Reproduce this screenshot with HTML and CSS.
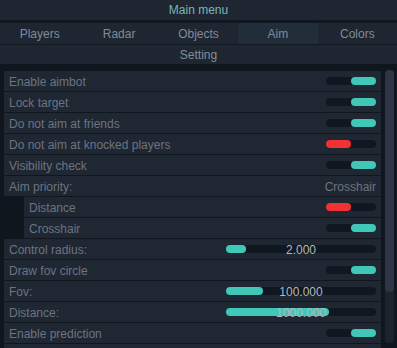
FILE: index.html
```html
<!DOCTYPE html>
<html lang="en">
<head>
  <meta charset="UTF-8">
  <title>Main menu</title>
  <link rel="stylesheet" href="styles.css">
</head>
<body>
  <div id="menu">
    <div class="titulo">Main menu</div>
    <div class="abas">
      <div class="aba">Players</div>
      <div class="aba">Radar</div>
      <div class="aba">Objects</div>
      <div class="aba ativa">Aim</div>
      <div class="aba">Colors</div>
    </div>
    <div class="secao">Setting</div>

    <div class="conteudo">
      <div class="lista">
        <div class="linha"><span>Enable aimbot</span><div class="chave ligada"></div></div>
        <div class="linha"><span>Lock target</span><div class="chave ligada"></div></div>
        <div class="linha"><span>Do not aim at friends</span><div class="chave ligada"></div></div>
        <div class="linha"><span>Do not aim at knocked players</span><div class="chave desligada"></div></div>
        <div class="linha"><span>Visibility check</span><div class="chave ligada"></div></div>
        <div class="linha"><span>Aim priority:</span><span class="valor">Crosshair</span></div>
        <div class="linha sub"><span>Distance</span><div class="chave desligada"></div></div>
        <div class="linha sub"><span>Crosshair</span><div class="chave ligada"></div></div>
        <div class="linha"><span>Control radius:</span>
          <div class="barra"><div class="preenche" style="width: 20px;"></div><span>2.000</span></div>
        </div>
        <div class="linha"><span>Draw fov circle</span><div class="chave ligada"></div></div>
        <div class="linha"><span>Fov:</span>
          <div class="barra"><div class="preenche" style="width: 37px;"></div><span>100.000</span></div>
        </div>
        <div class="linha"><span>Distance:</span>
          <div class="barra"><div class="preenche" style="width: 103px;"></div><span>1000.000</span></div>
        </div>
        <div class="linha"><span>Enable prediction</span><div class="chave ligada"></div></div>
        <!-- proxima linha fica cortada pela janela -->
        <div class="linha"></div>
      </div>
      <div class="rolagem"><div class="polegar"></div></div>
    </div>
  </div>
</body>
</html>
```

FILE: styles.css
```css
* {
  margin: 0;
  padding: 0;
  box-sizing: border-box;
}

body {
  background-color: #0f161e;
  font-family: "Liberation Sans", Arial, sans-serif;
  font-size: 12px;
  overflow: hidden;
}

#menu {
  width: 397px;
  height: 348px;
  overflow: hidden;
}

.titulo {
  height: 20px;
  line-height: 21px;
  background-color: #1d2631;
  color: #74b9b9;
  text-align: center;
}

.abas {
  display: flex;
  margin-top: 3px;
  height: 22px;
  background-color: #1d2631;
  border-bottom: 1px solid #111820;
}

.aba {
  flex: 1;
  line-height: 22px;
  text-align: center;
  color: #808b98;
}

.ativa {
  background-color: #222d3a;
}

.secao {
  height: 19px;
  line-height: 20px;
  background-color: #1d2631;
  color: #858d97;
  text-align: center;
}

.conteudo {
  display: flex;
  gap: 4px;
  padding: 6px 3px 0 4px;
  height: 284px;
}

.lista {
  flex: 1;
  padding-top: 1px;
}

.linha {
  display: flex;
  align-items: center;
  justify-content: space-between;
  height: 20px;
  margin-bottom: 1px;
  padding: 1px 5px 0;
  background-color: #1f2732;
  color: #6c7480;
}

.sub {
  margin-left: 20px;
}

.valor {
  color: #6c7480;
}

.chave {
  width: 50px;
  height: 8px;
  margin-top: -1px;
  border-radius: 4px;
  background-color: #0f1820;
  display: flex;
}

.chave::after {
  content: "";
  width: 25px;
  height: 8px;
  border-radius: 4px;
}

.ligada {
  justify-content: flex-end;
}

.ligada::after {
  background-color: #40c7b8;
}

.desligada::after {
  background-color: #f03235;
}

.barra {
  position: relative;
  width: 150px;
  height: 8px;
  margin-top: -1px;
  border-radius: 4px;
  background-color: #0f1820;
}

.preenche {
  height: 8px;
  border-radius: 4px;
  background-color: #40c7b8;
}

.barra span {
  position: absolute;
  left: 0;
  right: 0;
  top: -2px;
  text-align: center;
  line-height: 14px;
  color: #b3b8bf;
}

.rolagem {
  width: 9px;
  height: 273px;
  border-radius: 4px;
  background-color: #1c232d;
}

.polegar {
  height: 222px;
  border-radius: 4px;
  background-color: #2e3646;
}
```
